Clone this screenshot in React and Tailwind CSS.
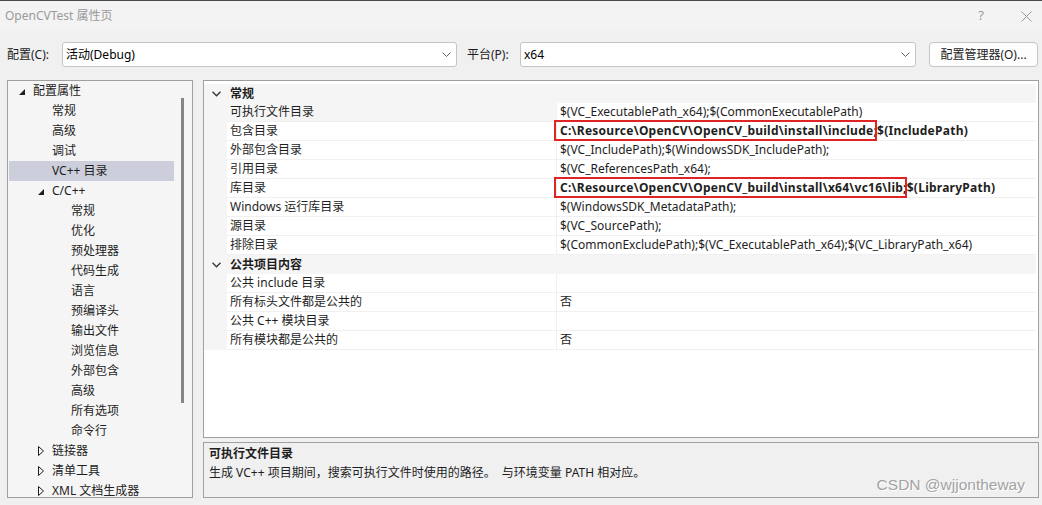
import React from 'react'

const tree = [
  { label: '配置属性', level: 0, icon: 'open' },
  { label: '常规', level: 1 },
  { label: '高级', level: 1 },
  { label: '调试', level: 1 },
  { label: 'VC++ 目录', level: 1, selected: true },
  { label: 'C/C++', level: 1, icon: 'open' },
  { label: '常规', level: 2 },
  { label: '优化', level: 2 },
  { label: '预处理器', level: 2 },
  { label: '代码生成', level: 2 },
  { label: '语言', level: 2 },
  { label: '预编译头', level: 2 },
  { label: '输出文件', level: 2 },
  { label: '浏览信息', level: 2 },
  { label: '外部包含', level: 2 },
  { label: '高级', level: 2 },
  { label: '所有选项', level: 2 },
  { label: '命令行', level: 2 },
  { label: '链接器', level: 1, icon: 'closed' },
  { label: '清单工具', level: 1, icon: 'closed' },
  { label: 'XML 文档生成器', level: 1, icon: 'closed' },
]

const groups = [
  {
    title: '常规',
    rows: [
      { name: '可执行文件目录', value: '$(VC_ExecutablePath_x64);$(CommonExecutablePath)', selected: true },
      { name: '包含目录', boxed: 'C:\\Resource\\OpenCV\\OpenCV_build\\install\\include;', rest: '$(IncludePath)' },
      { name: '外部包含目录', value: '$(VC_IncludePath);$(WindowsSDK_IncludePath);' },
      { name: '引用目录', value: '$(VC_ReferencesPath_x64);' },
      { name: '库目录', boxed: 'C:\\Resource\\OpenCV\\OpenCV_build\\install\\x64\\vc16\\lib;', rest: '$(LibraryPath)' },
      { name: 'Windows 运行库目录', value: '$(WindowsSDK_MetadataPath);' },
      { name: '源目录', value: '$(VC_SourcePath);' },
      { name: '排除目录', value: '$(CommonExcludePath);$(VC_ExecutablePath_x64);$(VC_LibraryPath_x64)' },
    ],
  },
  {
    title: '公共项目内容',
    rows: [
      { name: '公共 include 目录', value: '' },
      { name: '所有标头文件都是公共的', value: '否' },
      { name: '公共 C++ 模块目录', value: '' },
      { name: '所有模块都是公共的', value: '否' },
    ],
  },
]

const font = { fontFamily: '"Noto Sans", "Noto Sans CJK SC", sans-serif' }

function ComboChevron() {
  return (
    <svg width="9" height="5" viewBox="0 0 9 5" className="shrink-0">
      <path d="M0.5 0.5 L4.5 4.5 L8.5 0.5" fill="none" stroke="#5f5f5f" strokeWidth="1" />
    </svg>
  )
}

function Combo({ value, className }) {
  return (
    <div className={`flex h-[25px] items-center justify-between rounded-[3px] border border-[#c4c4c4] bg-white pl-[3px] pr-[5px] ${className}`}>
      <span className="text-[12px] text-black">{value}</span>
      <ComboChevron />
    </div>
  )
}

function TreeIcon({ type }) {
  if (type === 'open') {
    return (
      <svg width="6" height="6" viewBox="0 0 6 6">
        <polygon points="6,0 6,6 0,6" fill="#1e1e1e" />
      </svg>
    )
  }
  return (
    <svg width="6" height="10" viewBox="0 0 6 10">
      <polygon points="0.5,0.5 5.5,5 0.5,9.5" fill="none" stroke="#1e1e1e" strokeWidth="1" />
    </svg>
  )
}

function TreeRow({ item }) {
  const left = 24 + item.level * 19
  return (
    <div className={`relative flex h-[20px] items-center ${item.selected ? 'bg-[#cccedb]' : ''}`}>
      {item.icon ? (
        <span
          className={`absolute flex items-center ${item.icon === 'open' ? 'top-[8px]' : 'top-[5px]'}`}
          style={{ left: left - 14 }}
        >
          <TreeIcon type={item.icon} />
        </span>
      ) : null}
      <span className="text-[12px] leading-none text-[#1e1e1e]" style={{ marginLeft: left }}>
        {item.label}
      </span>
    </div>
  )
}

function GroupHeader({ title }) {
  return (
    <div className="flex h-[19px] items-center bg-[#f5f5f5]">
      <span className="flex w-[23px] justify-center pl-[1px]">
        <svg width="9" height="6" viewBox="0 0 9 6">
          <path d="M0.5 0.8 L4.5 4.8 L8.5 0.8" fill="none" stroke="#333" strokeWidth="1.3" />
        </svg>
      </span>
      <span className="pl-[3px] text-[12px] font-bold text-[#1e1e1e]">{title}</span>
    </div>
  )
}

function PropRow({ row }) {
  return (
    <div className="flex h-[19px] bg-[#f5f5f5]">
      <div className="w-[23px] shrink-0" />
      <div
        className={`flex w-[329px] shrink-0 items-center border-b border-[#f0f0f0] pl-[3px] text-[12px] text-[#1e1e1e] ${row.selected ? 'bg-[#f5f5f5]' : 'bg-white'}`}
      >
        {row.name}
      </div>
      <div className="flex flex-1 items-center whitespace-nowrap border-b border-l border-[#f0f0f0] bg-white pl-[3px] text-[12px] text-[#1e1e1e]">
        {row.boxed ? (
          <span className="font-bold tracking-[0.25px]">
            <span className="relative">
              {row.boxed}
              <span className="absolute -top-[2px] -bottom-[2px] -left-[6px] right-[0px] border-2 border-[#e02424]" />
            </span>
            {row.rest}
          </span>
        ) : (
          row.value
        )}
      </div>
    </div>
  )
}

export default function App() {
  return (
    <div className="relative flex h-[505px] w-[1042px] flex-col overflow-hidden border-t border-[#4a4a4a] bg-[#f0f0f0]" style={font}>
      {/* title bar */}
      <div className="flex h-[30px] shrink-0 items-center justify-between bg-[#f3f3f3] pl-[5px] pr-[10px]">
        <span className="text-[12px] text-[#9a9a9a]">OpenCVTest 属性页</span>
        <div className="flex items-center gap-[37px]">
          <span className="text-[13px] text-[#9a9a9a]">?</span>
          <svg width="11" height="11" viewBox="0 0 11 11">
            <path d="M0.5 0.5 L10.5 10.5 M10.5 0.5 L0.5 10.5" stroke="#9a9a9a" strokeWidth="1" />
          </svg>
        </div>
      </div>

      {/* config row */}
      <div className="mt-[11px] flex h-[25px] shrink-0 items-center">
        <span className="ml-[7px] w-[55px] text-[12px] text-[#1e1e1e]">配置(C):</span>
        <Combo value="活动(Debug)" className="w-[395px]" />
        <span className="ml-[10px] w-[53px] text-[12px] text-[#1e1e1e]">平台(P):</span>
        <Combo value="x64" className="w-[396px]" />
        <button className="ml-[13px] h-[25px] w-[109px] rounded-[4px] border border-[#c6c6c6] bg-[#fdfdfd] text-[12px] text-[#1e1e1e]">
          配置管理器(O)...
        </button>
      </div>

      {/* body */}
      <div className="mt-[13px] flex min-h-0 flex-1 pb-[7px]">
        {/* tree */}
        <div className="ml-[7px] flex w-[186px] shrink-0 border border-[#a0a0a0] bg-[#f5f5f5]">
          <div className="w-[166px] pl-[1px]">
            <div className="w-[165px]">
              {tree.map((item, i) => (
                <TreeRow key={i} item={item} />
              ))}
            </div>
          </div>
          <div className="ml-[7px] mt-[17px] h-[305px] w-[3px] bg-[#858585]" />
        </div>

        {/* right side */}
        <div className="ml-[10px] mr-[3px] flex flex-1 flex-col">
          <div className="flex h-[358px] flex-col border border-[#a0a0a0] bg-white pr-[2px] pt-[3px]">
            {groups.map((g) => (
              <div key={g.title}>
                <GroupHeader title={g.title} />
                {g.rows.map((r) => (
                  <PropRow key={r.name} row={r} />
                ))}
              </div>
            ))}
          </div>
          <div className="mt-[4px] flex flex-1 flex-col border border-[#a0a0a0] bg-[#f0f0f0] pl-[5px] pt-[1px]">
            <span className="text-[12px] font-bold leading-[19px] text-[#1e1e1e]">可执行文件目录</span>
            <span className="text-[12px] leading-[19px] text-[#1e1e1e]">
              生成 VC++ 项目期间，搜索可执行文件时使用的路径。&nbsp; 与环境变量 PATH 相对应。
            </span>
          </div>
        </div>
      </div>

      <span
        className="absolute bottom-[9px] right-[17px] text-[15.5px] text-[#a3a3a3] [text-shadow:1px_1px_0_#ffffff]"
        style={{ fontFamily: '"Liberation Sans", Arial, sans-serif' }}
      >
        CSDN @wjjontheway
      </span>
    </div>
  )
}
